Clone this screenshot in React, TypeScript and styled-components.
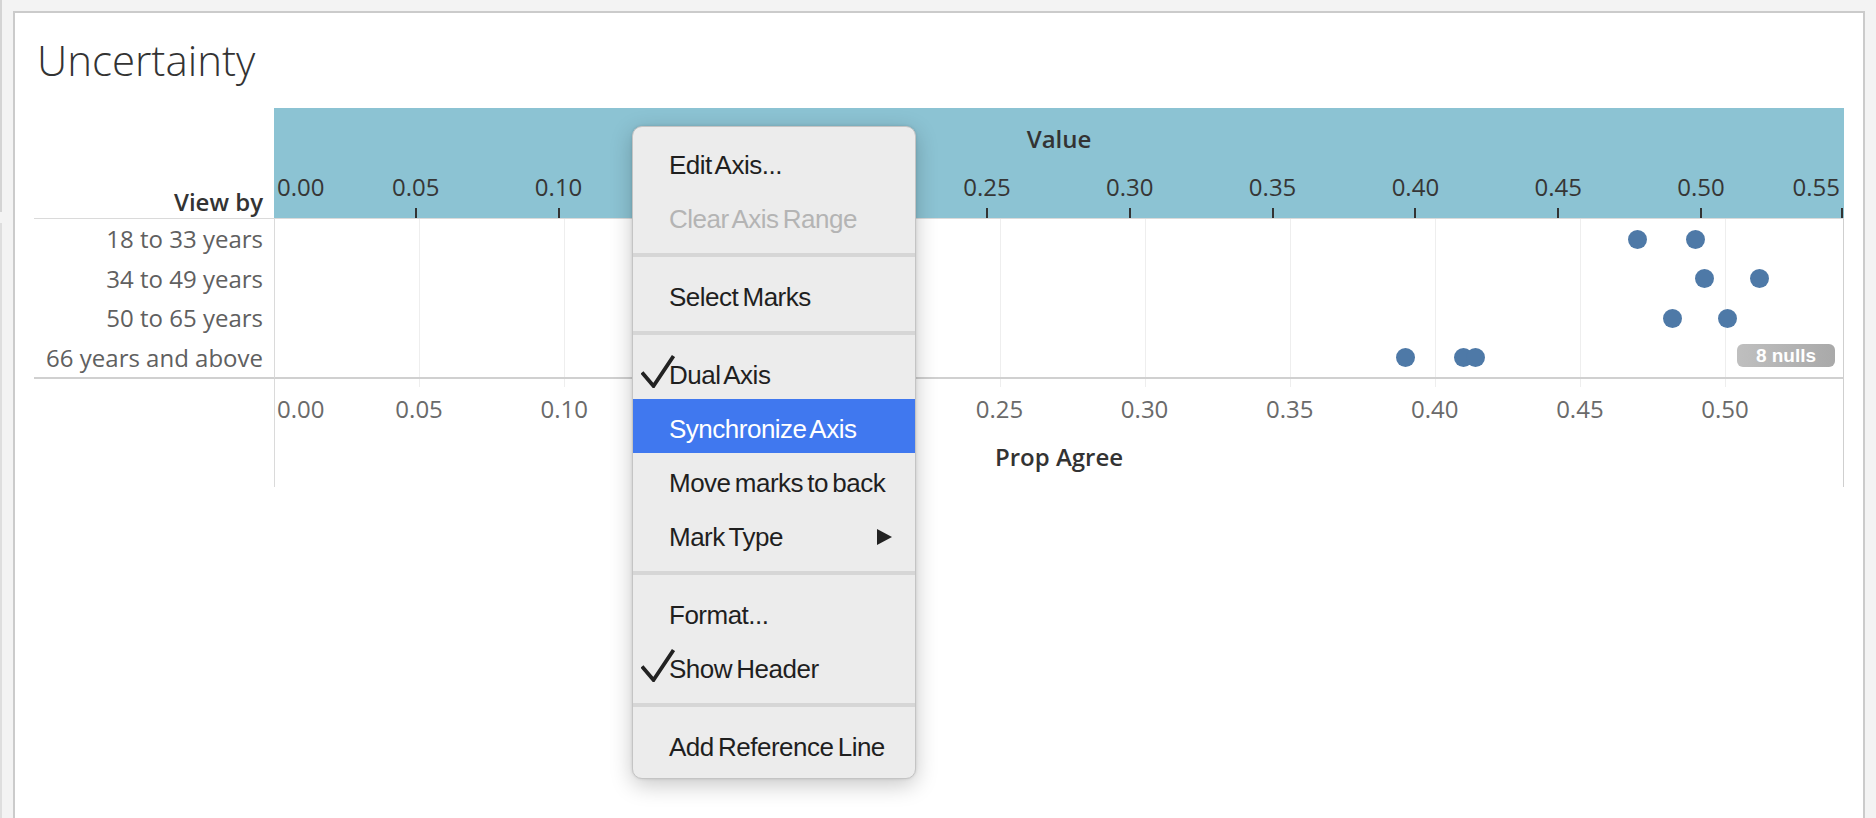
import React from 'react';
import styled, { createGlobalStyle } from 'styled-components';

const GlobalStyle = createGlobalStyle`
  html, body { margin: 0; padding: 0; background: #f3f3f3; overflow: hidden; }
  #root { width: 1876px; height: 818px; }
  *, *::before, *::after { box-sizing: border-box; }
`;

const TOP_STEP = 142.8; // px per 0.05 on the header axis
const PX_PER_UNIT = 2902; // px per 1.0 on the plot / bottom axis

const Page = styled.div`
  position: relative;
  width: 1876px;
  height: 818px;
  display: flex;
  padding: 11px 11px 0 0;
  overflow: hidden;
  background: #f3f3f3;
  font-family: 'Open Sans', 'Noto Sans', sans-serif;
`;

const EdgeStrip = styled.div`
  width: 2px;
  margin: -11px 11px 0 0;
  display: flex;
  flex-direction: column;
`;

const EdgeSegment = styled.div<{ $h: number; $c: string }>`
  height: ${(p) => p.$h}px;
  background: ${(p) => p.$c};
  flex-shrink: 0;
`;

const Frame = styled.div`
  flex: 1;
  background: #fff;
  border: 2px solid #cbcbcb;
  border-bottom: none;
  padding: 0 19px;
  display: flex;
  flex-direction: column;
`;

const Title = styled.h1`
  margin: 20px 0 21px 3px;
  font-family: 'Open Sans', sans-serif;
  font-weight: 300;
  font-size: 42px;
  line-height: 54px;
  color: #333;
`;

const Chart = styled.div`
  display: grid;
  grid-template-columns: 240px 1570px;
  grid-template-rows: 111px 160px 108px;
`;

const ViewByCell = styled.div`
  display: flex;
  align-items: flex-end;
  justify-content: flex-end;
  padding: 0 11px 1px 0;
  border-bottom: 1px solid #dadada;
  font-size: 24px;
  font-weight: 600;
  line-height: 30px;
  color: #333;
`;

const Header = styled.div`
  display: flex;
  flex-direction: column;
  padding-top: 15px;
  background: #8cc3d3;
  border-bottom: 1px solid #dadada;
`;

const HeaderTitle = styled.div`
  text-align: center;
  font-size: 24px;
  font-weight: 600;
  line-height: 32px;
  color: #333;
`;

const TickStrip = styled.div`
  position: relative;
  flex: 1;
`;

type Align = 'start' | 'center' | 'end';

const AxisLabel = styled.span<{ $align: Align; $tone: 'dark' | 'grey' }>`
  position: absolute;
  top: ${(p) => (p.$tone === 'dark' ? 16 : 0)}px;
  font-size: 24px;
  line-height: 32px;
  font-weight: 400;
  white-space: nowrap;
  color: ${(p) => (p.$tone === 'dark' ? '#363636' : '#6a6a6a')};
  transform: ${(p) =>
    p.$align === 'center' ? 'translateX(-50%)' : p.$align === 'end' ? 'translateX(-100%)' : 'none'};
`;

const Tick = styled.span`
  position: absolute;
  bottom: 0;
  width: 2px;
  height: 10px;
  background: #333;
`;

const LabelColumn = styled.div`
  display: flex;
  flex-direction: column;
  border-bottom: 2px solid #d0d0d0;
`;

const RowLabel = styled.div`
  flex: 1;
  display: flex;
  align-items: center;
  justify-content: flex-end;
  padding: 1px 11px 0 0;
  font-size: 24px;
  line-height: 32px;
  color: #606060;
  white-space: nowrap;
`;

const Plot = styled.div`
  position: relative;
  display: flex;
  flex-direction: column;
  border-left: 1px solid #dadada;
  border-right: 1px solid #cfcfcf;
  border-bottom: 2px solid #d0d0d0;
`;

const GridLine = styled.span`
  position: absolute;
  top: 0;
  bottom: 0;
  width: 1px;
  background: #eeeeee;
`;

const PlotRow = styled.div`
  position: relative;
  flex: 1;
`;

const Dot = styled.span`
  position: absolute;
  top: 50%;
  width: 19px;
  height: 19px;
  margin: -9px 0 0 -9.5px;
  border-radius: 50%;
  background: #4e79a7;
`;

const NullBadge = styled.span`
  position: absolute;
  right: 8px;
  bottom: 10px;
  width: 98px;
  height: 23px;
  border-radius: 6px;
  background: linear-gradient(90deg, #bfbfbf, #a9a9a9);
  color: #fff;
  font-family: 'Liberation Sans', Arial, sans-serif;
  font-weight: 700;
  font-size: 19px;
  line-height: 23px;
  text-align: center;
`;

const EmptyCell = styled.div``;

const BottomAxis = styled.div`
  position: relative;
  display: flex;
  flex-direction: column;
  padding-top: 14px;
  border-left: 1px solid #dadada;
  border-right: 1px solid #cfcfcf;
`;

const GridStub = styled.span`
  position: absolute;
  top: 0;
  width: 1px;
  height: 8px;
  background: #eeeeee;
`;

const AxisLabelStrip = styled.div`
  position: relative;
  height: 32px;
`;

const AxisTitle = styled.div`
  margin-top: 16px;
  text-align: center;
  font-size: 24px;
  font-weight: 600;
  line-height: 32px;
  color: #333;
`;

/* ---------- context menu ---------- */

const Menu = styled.div`
  position: absolute;
  left: 632px;
  top: 126px;
  width: 284px;
  padding: 8px 0 7px;
  background: #ececec;
  border: 1px solid #c4c4c4;
  border-radius: 10px;
  box-shadow: 0 6px 22px rgba(0, 0, 0, 0.22), 0 0 3px rgba(0, 0, 0, 0.12);
  font-family: 'Liberation Sans', Arial, sans-serif;
`;

type ItemState = 'normal' | 'disabled' | 'active';

const MenuItem = styled.div<{ $state: ItemState }>`
  position: relative;
  display: flex;
  align-items: center;
  height: 54px;
  padding: 6px 0 0 36px;
  font-size: 26px;
  line-height: 48px;
  letter-spacing: -0.5px;
  word-spacing: -2.5px;
  white-space: nowrap;
  color: ${(p) => (p.$state === 'disabled' ? '#b4b4b4' : p.$state === 'active' ? '#fff' : '#1f1f1f')};
  background: ${(p) => (p.$state === 'active' ? '#4078ef' : 'transparent')};
`;

const Separator = styled.div`
  height: 4px;
  margin: 10px 0;
  background: #d6d6d6;
`;

const CheckMark = styled.svg`
  position: absolute;
  left: 8px;
  top: 9px;
`;

const SubArrow = styled.svg`
  margin-left: auto;
  margin-right: 23px;
`;

type Row = { label: string; values: number[] };

const rows: Row[] = [
  { label: '18 to 33 years', values: [0.47, 0.49] },
  { label: '34 to 49 years', values: [0.493, 0.512] },
  { label: '50 to 65 years', values: [0.482, 0.501] },
  { label: '66 years and above', values: [0.39, 0.41, 0.414] },
];

const topTicks = Array.from({ length: 12 }, (_, k) => k);
const bottomTicks = Array.from({ length: 11 }, (_, k) => k);
const fmt = (k: number) => (k * 0.05).toFixed(2);

type MenuEntry =
  | { kind: 'sep' }
  | { kind: 'item'; label: string; state?: ItemState; checked?: boolean; submenu?: boolean };

const menu: MenuEntry[] = [
  { kind: 'item', label: 'Edit Axis...' },
  { kind: 'item', label: 'Clear Axis Range', state: 'disabled' },
  { kind: 'sep' },
  { kind: 'item', label: 'Select Marks' },
  { kind: 'sep' },
  { kind: 'item', label: 'Dual Axis', checked: true },
  { kind: 'item', label: 'Synchronize Axis', state: 'active' },
  { kind: 'item', label: 'Move marks to back' },
  { kind: 'item', label: 'Mark Type', submenu: true },
  { kind: 'sep' },
  { kind: 'item', label: 'Format...' },
  { kind: 'item', label: 'Show Header', checked: true },
  { kind: 'sep' },
  { kind: 'item', label: 'Add Reference Line' },
];

const plotX = (v: number) => v * PX_PER_UNIT - 1;

export default function App() {
  return (
    <>
      <GlobalStyle />
      <Page>
        <EdgeStrip>
          <EdgeSegment $h={212} $c="#d4d4d4" />
          <EdgeSegment $h={11} $c="#f3f3f3" />
          <EdgeSegment $h={600} $c="#dedede" />
        </EdgeStrip>
        <Frame>
          <Title>Uncertainty</Title>
          <Chart>
            <ViewByCell>View by</ViewByCell>
            <Header>
              <HeaderTitle>Value</HeaderTitle>
              <TickStrip>
                {topTicks.map((k) => {
                  const x = k * TOP_STEP - 1;
                  const align: Align = k === 0 ? 'start' : k === 11 ? 'end' : 'center';
                  const lx = k === 0 ? 3 : k === 11 ? 1566 : x;
                  return (
                    <React.Fragment key={k}>
                      <AxisLabel $align={align} $tone="dark" style={{ left: lx }}>
                        {fmt(k)}
                      </AxisLabel>
                      {k > 0 && <Tick style={{ left: Math.min(x, 1568) - 1 }} />}
                    </React.Fragment>
                  );
                })}
              </TickStrip>
            </Header>

            <LabelColumn>
              {rows.map((r) => (
                <RowLabel key={r.label}>{r.label}</RowLabel>
              ))}
            </LabelColumn>
            <Plot>
              {bottomTicks.slice(1).map((k) => (
                <GridLine key={k} style={{ left: plotX(k * 0.05) }} />
              ))}
              {rows.map((r) => (
                <PlotRow key={r.label}>
                  {r.values.map((v, i) => (
                    <Dot key={i} style={{ left: plotX(v) }} />
                  ))}
                </PlotRow>
              ))}
              <NullBadge>8 nulls</NullBadge>
            </Plot>

            <EmptyCell />
            <BottomAxis>
              {bottomTicks.slice(1).map((k) => (
                <GridStub key={k} style={{ left: plotX(k * 0.05) }} />
              ))}
              <AxisLabelStrip>
                {bottomTicks.map((k) => (
                  <AxisLabel
                    key={k}
                    $align={k === 0 ? 'start' : 'center'}
                    $tone="grey"
                    style={{ left: k === 0 ? 2 : plotX(k * 0.05) }}
                  >
                    {fmt(k)}
                  </AxisLabel>
                ))}
              </AxisLabelStrip>
              <AxisTitle>Prop Agree</AxisTitle>
            </BottomAxis>
          </Chart>
        </Frame>

        <Menu>
          {menu.map((m, i) =>
            m.kind === 'sep' ? (
              <Separator key={i} />
            ) : (
              <MenuItem key={i} $state={m.state ?? 'normal'}>
                {m.checked && (
                  <CheckMark width="34" height="34" viewBox="0 0 34 34">
                    <path d="M1 18.5 L12.5 32 L32.5 2" fill="none" stroke="#222" strokeWidth="3.8" />
                  </CheckMark>
                )}
                {m.label}
                {m.submenu && (
                  <SubArrow width="16" height="16" viewBox="0 0 16 16">
                    <polygon points="1,0 16,8 1,16" fill="#222" />
                  </SubArrow>
                )}
              </MenuItem>
            )
          )}
        </Menu>
      </Page>
    </>
  );
}
